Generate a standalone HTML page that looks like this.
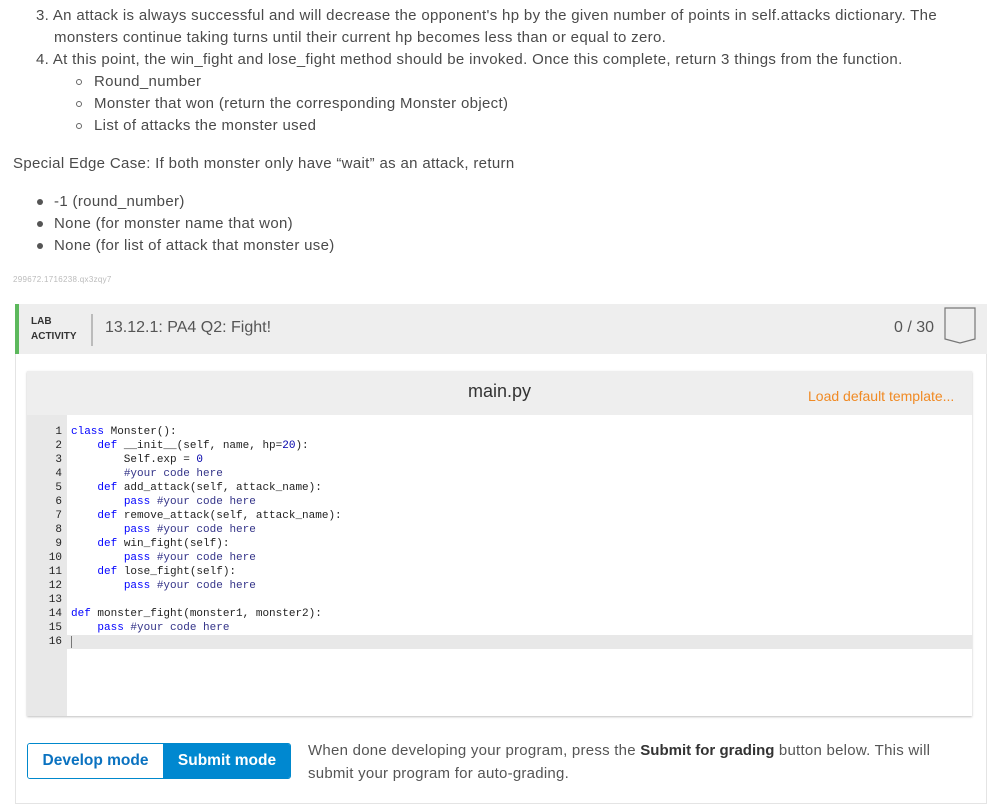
<!DOCTYPE html>
<html><head><meta charset="utf-8">
<style>
*{margin:0;padding:0;box-sizing:border-box}
body{width:1008px;height:804px;background:#fff;font-family:"Liberation Sans",sans-serif;color:#444;position:relative;overflow:hidden}
.t{position:absolute;font-size:15px;white-space:nowrap;letter-spacing:0.33px;color:#4a4a4a}
.circ{position:absolute;width:6px;height:6px;border:1px solid #666;border-radius:50%}
.dot{position:absolute;width:6px;height:6px;background:#555;border-radius:50%}
.code{position:absolute;font-family:"Liberation Mono",monospace;font-size:11px;line-height:14px;white-space:pre;color:#222}
.k{color:#00f}.c{color:#338}.n{color:#00a}
.ln{position:absolute;font-family:"Liberation Mono",monospace;font-size:11px;line-height:14px;text-align:right;width:36px;color:#222;white-space:pre}
</style></head><body>
<div class="t" style="left:36px;top:7px">3. An attack is always successful and will decrease the opponent's hp by the given number of points in self.attacks dictionary. The</div>
<div class="t" style="left:54px;top:29px">monsters continue taking turns until their current hp becomes less than or equal to zero.</div>
<div class="t" style="left:36px;top:51px">4. At this point, the win_fight and lose_fight method should be invoked. Once this complete, return 3 things from the function.</div>
<div class="circ" style="left:76px;top:79px"></div><div class="t" style="left:94px;top:73px">Round_number</div>
<div class="circ" style="left:76px;top:101px"></div><div class="t" style="left:94px;top:95px">Monster that won (return the corresponding Monster object)</div>
<div class="circ" style="left:76px;top:123px"></div><div class="t" style="left:94px;top:117px">List of attacks the monster used</div>
<div class="t" style="left:13px;top:155px">Special Edge Case: If both monster only have “wait” as an attack, return</div>
<div class="dot" style="left:37px;top:199px"></div><div class="t" style="left:54px;top:193px">-1 (round_number)</div>
<div class="dot" style="left:37px;top:221px"></div><div class="t" style="left:54px;top:215px">None (for monster name that won)</div>
<div class="dot" style="left:37px;top:243px"></div><div class="t" style="left:54px;top:237px">None (for list of attack that monster use)</div>
<div style="position:absolute;left:13px;top:275px;font-size:8px;color:#bbb;letter-spacing:0.3px">299672.1716238.qx3zqy7</div>

<div style="position:absolute;left:15px;top:304px;width:972px;height:500px;border:1px solid #e4e4e4;background:#fff"></div>
<div style="position:absolute;left:15px;top:304px;width:972px;height:50px;background:#eee;border-left:4px solid #5cb85c"></div>
<div style="position:absolute;left:31px;top:314px;font-size:10px;font-weight:bold;color:#333;line-height:15px">LAB<br>ACTIVITY</div>
<div style="position:absolute;left:91px;top:314px;width:2px;height:32px;background:#bbb"></div>
<div style="position:absolute;left:105px;top:319px;font-size:16px;color:#555">13.12.1: PA4 Q2: Fight!</div>
<div style="position:absolute;left:894px;top:319px;font-size:16px;color:#555">0 / 30</div>
<svg style="position:absolute;left:943px;top:307px" width="34" height="38"><path d="M2 1H32V32L17 36L2 32Z" fill="none" stroke="#777" stroke-width="1.2"/></svg>

<div style="position:absolute;left:27px;top:371px;width:945px;height:345px;background:#fff;box-shadow:0 1px 2px rgba(0,0,0,.25)"></div>
<div style="position:absolute;left:27px;top:371px;width:945px;height:44px;background:#eee"></div>
<div style="position:absolute;left:468px;top:381px;font-size:18px;color:#333">main.py</div>
<div style="position:absolute;left:808px;top:388px;font-size:14px;color:#f08a24">Load default template...</div>
<div style="position:absolute;left:27px;top:415px;width:40px;height:301px;background:#e8e8e8"></div>
<div style="position:absolute;left:27px;top:635px;width:945px;height:14px;background:#e8e8e8"></div>
<div style="position:absolute;left:71px;top:636px;width:1px;height:12px;background:#777"></div>
<div class="ln" style="left:26px;top:425px">1
2
3
4
5
6
7
8
9
10
11
12
13
14
15
16</div>
<div class="code" style="left:71px;top:425px"><span class="k">class</span> Monster():
    <span class="k">def</span> __init__(self, name, hp=<span class="n">20</span>):
        Self.exp = <span class="n">0</span>
        <span class="c">#your code here</span>
    <span class="k">def</span> add_attack(self, attack_name):
        <span class="k">pass</span> <span class="c">#your code here</span>
    <span class="k">def</span> remove_attack(self, attack_name):
        <span class="k">pass</span> <span class="c">#your code here</span>
    <span class="k">def</span> win_fight(self):
        <span class="k">pass</span> <span class="c">#your code here</span>
    <span class="k">def</span> lose_fight(self):
        <span class="k">pass</span> <span class="c">#your code here</span>

<span class="k">def</span> monster_fight(monster1, monster2):
    <span class="k">pass</span> <span class="c">#your code here</span>
</div>

<div style="position:absolute;left:27px;top:743px;width:264px;height:36px;border:1px solid #0088cc;border-radius:3px;overflow:hidden">
<div style="position:absolute;left:0;top:0;width:135px;height:34px;background:#fff;color:#0a72c0;font-weight:bold;font-size:15.5px;text-align:center;line-height:34px">Develop mode</div>
<div style="position:absolute;left:135px;top:0;width:128px;height:34px;background:#0088d0;color:#fff;font-weight:bold;font-size:15.5px;text-align:center;line-height:34px">Submit mode</div>
</div>
<div class="t" style="left:308px;top:739px;line-height:23px;color:#555;letter-spacing:0.25px">When done developing your program, press the <b style="color:#333;letter-spacing:0">Submit for grading</b> button below. This will<br>submit your program for auto-grading.</div>
</body></html>
